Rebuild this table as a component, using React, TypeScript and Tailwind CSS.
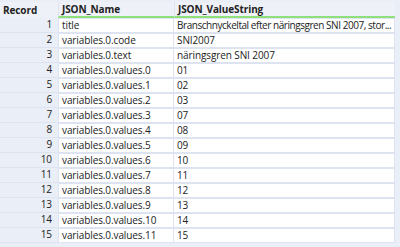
const rows: [string, string][] = [
  ["title", "Branschnyckeltal efter näringsgren SNI 2007, stor..."],
  ["variables.0.code", "SNI2007"],
  ["variables.0.text", "näringsgren SNI 2007"],
  ["variables.0.values.0", "01"],
  ["variables.0.values.1", "02"],
  ["variables.0.values.2", "03"],
  ["variables.0.values.3", "07"],
  ["variables.0.values.4", "08"],
  ["variables.0.values.5", "09"],
  ["variables.0.values.6", "10"],
  ["variables.0.values.7", "11"],
  ["variables.0.values.8", "12"],
  ["variables.0.values.9", "13"],
  ["variables.0.values.10", "14"],
  ["variables.0.values.11", "15"],
];

export default function App() {
  return (
    <div
      className="w-[400px] h-[247px] overflow-hidden bg-[#eaeef7] text-[10px] tracking-[-0.1px] text-[#222]"
      style={{ fontFamily: '"Open Sans", "Noto Sans", sans-serif' }}
    >
      <div className="pt-[2px] pr-[5px]">
        <div className="grid grid-cols-[58px_116px_221px] h-[16px] items-center font-bold bg-[#eef1f8]">
          <div className="pl-[3px] leading-[14px]">Record</div>
          <div className="h-full pl-[3px] leading-[14px] border-b-2 border-[#8ee07c] border-l border-l-[#dfe4f0]">
            JSON_Name
          </div>
          <div className="h-full pl-[3px] leading-[14px] border-b-2 border-[#8ee07c] border-l border-l-[#dfe4f0]">
            JSON_ValueString
          </div>
        </div>
        {rows.map(([name, value], i) => (
          <div
            key={i}
            className="grid grid-cols-[58px_116px_221px] h-[15px] leading-[13px]"
          >
            <div className="pr-[6px] text-right border-b border-[#dde3f0] bg-[#eaeef7]">
              {i + 1}
            </div>
            <div className="pl-[3px] bg-white border border-[#dde3f0] whitespace-nowrap overflow-hidden">
              {name}
            </div>
            <div
              className={
                i === 0
                  ? "pl-[3px] bg-white border border-l-0 border-[#dde3f0] whitespace-nowrap overflow-hidden tracking-[-0.45px]"
                  : "pl-[3px] bg-white border border-l-0 border-[#dde3f0] whitespace-nowrap overflow-hidden"
              }
            >
              {value}
            </div>
          </div>
        ))}
      </div>
    </div>
  );
}
